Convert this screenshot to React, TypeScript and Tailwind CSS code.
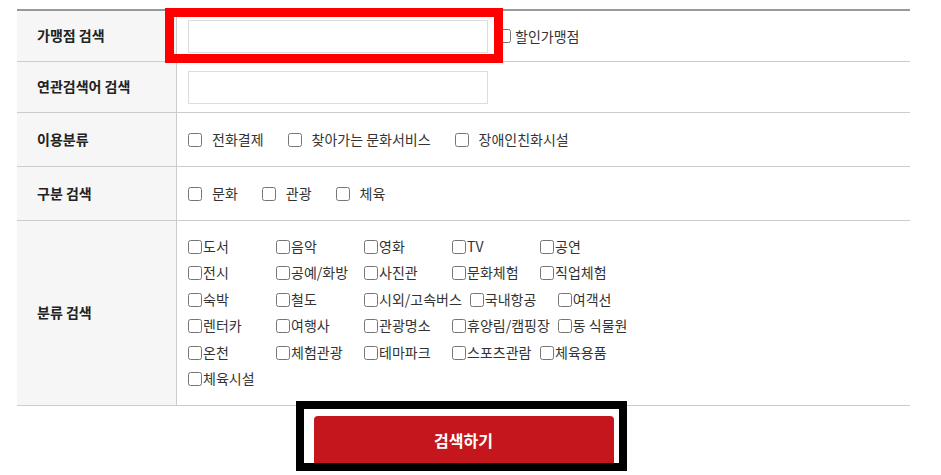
import React from 'react';

const font = { fontFamily: '"Noto Sans CJK KR", "Noto Sans", sans-serif' };

const useTypes = ['전화결제', '찾아가는 문화서비스', '장애인친화시설'];
const divisions = ['문화', '관광', '체육'];
const categories = [
  ['도서', '음악', '영화', 'TV', '공연'],
  ['전시', '공예/화방', '사진관', '문화체험', '직업체험'],
  ['숙박', '철도', '시외/고속버스', '국내항공', '여객선'],
  ['렌터카', '여행사', '관광명소', '휴양림/캠핑장', '동 식물원'],
  ['온천', '체험관광', '테마파크', '스포츠관람', '체육용품'],
  ['체육시설'],
];

function Row({ label, height, children }: { label: string; height: string; children: React.ReactNode }) {
  return (
    <div className={`flex border-b border-[#cccccc] ${height}`}>
      <div className="flex w-[160px] shrink-0 items-center border-r border-[#cccccc] bg-[#f6f6f6] pb-[2px] pl-[20px] text-[14px] font-bold leading-none text-[#222]">
        {label}
      </div>
      <div className="flex flex-1 flex-col justify-center pl-[11px] text-[14px] leading-none text-[#333]">{children}</div>
    </div>
  );
}

export default function App() {
  return (
    <div className="relative h-[475px] w-[941px] bg-white pl-[17px] pt-[9px]" style={font}>
      <div className="w-[893px] border-t-2 border-[#999999]">
        <Row label="가맹점 검색" height="h-[51px]">
          <div className="flex items-center">
            <input className="h-[33px] w-[300px] border border-[#dddddd] bg-white" />
            <input type="checkbox" className="ml-[9px] h-[14px] w-[14px]" />
            <span className="ml-[4px] pb-[1px]">할인가맹점</span>
          </div>
        </Row>
        <Row label="연관검색어 검색" height="h-[51px]">
          <input className="h-[33px] w-[300px] border border-[#dddddd] bg-white" />
        </Row>
        <Row label="이용분류" height="h-[54px]">
          <div className="flex items-center">
            {useTypes.map((t) => (
              <label key={t} className="mr-[24px] flex items-center">
                <input type="checkbox" className="mr-[10px] h-[14px] w-[14px]" />
                <span className="pb-[2px]">{t}</span>
              </label>
            ))}
          </div>
        </Row>
        <Row label="구분 검색" height="h-[54px]">
          <div className="flex items-center">
            {divisions.map((t) => (
              <label key={t} className="mr-[24px] flex items-center">
                <input type="checkbox" className="mr-[10px] h-[14px] w-[14px]" />
                <span className="pb-[2px]">{t}</span>
              </label>
            ))}
          </div>
        </Row>
        <Row label="분류 검색" height="h-[185px]">
          <div className="flex flex-col">
            {categories.map((row, i) => (
              <div key={i} className="flex h-[26.5px] items-center">
                {row.map((t) => (
                  <label key={t} className="mr-[8px] flex min-w-[80px] items-center">
                    <input type="checkbox" className="mr-[1px] h-[14px] w-[14px]" />
                    <span className="pb-[2px]">{t}</span>
                  </label>
                ))}
              </div>
            ))}
          </div>
        </Row>
        <div className="flex justify-center pt-[10px]">
          <button className="h-[50px] w-[300px] rounded-[4px] bg-[#c4161c] pb-[2px] text-[16px] font-bold text-white">검색하기</button>
        </div>
      </div>

      <div className="pointer-events-none absolute left-[165px] top-[8px] h-[55px] w-[338px] border-[9px] border-[#ff0000]" />
      <div className="pointer-events-none absolute left-[296px] top-[401px] h-[70px] w-[331px] border-[8px] border-black" />
    </div>
  );
}
